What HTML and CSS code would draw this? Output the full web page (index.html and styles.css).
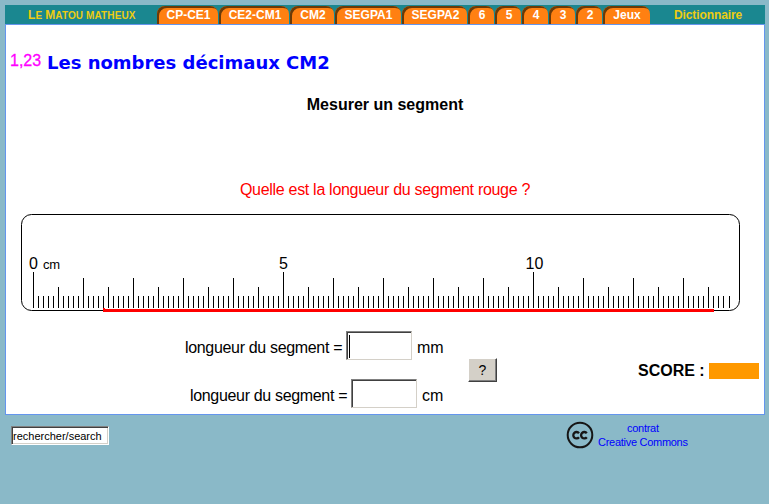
FILE: index.html
```html
<!DOCTYPE html>
<html lang="fr">
<head>
<meta charset="utf-8">
<title>Le Matou matheux</title>
<link rel="stylesheet" href="styles.css">
</head>
<body>
<div class="site">
  <nav class="nav">
    <a class="brand"><b>L</b>e <b>M</b>atou matheux</a>
    <div class="tabs">
      <a class="tab wide-1"><span>CP-CE1</span></a>
      <a class="tab wide-2"><span>CE2-CM1</span></a>
      <a class="tab wide-3"><span>CM2</span></a>
      <a class="tab wide-4"><span>SEGPA1</span></a>
      <a class="tab wide-5"><span>SEGPA2</span></a>
      <a class="tab"><span>6</span></a>
      <a class="tab"><span>5</span></a>
      <a class="tab"><span>4</span></a>
      <a class="tab"><span>3</span></a>
      <a class="tab"><span>2</span></a>
      <a class="tab wide-6"><span>Jeux</span></a>
    </div>
    <a class="dico">Dictionnaire</a>
  </nav>
  <main class="page">
    <header class="heading"><span class="deci">1,23</span><h1>Les nombres décimaux CM2</h1></header>
    <h2><span>Mesurer un segment</span></h2>
    <p class="question"><span>Quelle est la longueur du segment rouge ?</span></p>
    <svg class="ruler" width="719" height="99" viewBox="0 0 719 99">
      <rect x=".5" y="1.5" width="718" height="96" rx="10" fill="none" stroke="#000"/>
      <g id="ticks" fill="#000" shape-rendering="crispEdges"></g>
      <g class="figures">
        <text x="8" y="56">0</text><text class="unit" x="22" y="56" textLength="17">cm</text>
        <text x="258" y="56">5</text><text x="504.500" y="56">10</text>
      </g>
      <path d="M82 95h2v1h609v3H82z" fill="red" shape-rendering="crispEdges"/>
    </svg>
    <div class="answers">
      <div class="fields">
        <label class="row"><span class="label">longueur du segment =</span><span class="box"><i class="caret"></i></span><span>mm</span></label>
        <label class="row"><span class="label">longueur du segment =</span><span class="box"></span><span>cm</span></label>
      </div>
      <button class="check">?</button>
      <div class="score"><span>SCORE :</span><i class="bar"></i></div>
    </div>
  </main>
  <footer class="footer">
    <div class="search"><span>rechercher/search</span></div>
    <svg class="cc" width="28" height="28" viewBox="0 0 28 28" fill="none" stroke="#161616">
      <circle cx="14" cy="14" r="12.300" stroke-width="2"/>
      <path d="M13 12.200A3.200 3.200 0 1 0 13 16.200M20.800 12.200A3.200 3.200 0 1 0 20.800 16.200" stroke-width="2.300"/>
    </svg>
    <a class="license">contrat<br>Creative Commons</a>
  </footer>
</div>
<script src="ruler.js"></script>
</body>
</html>
```
FILE: styles.css
```css
* { box-sizing: border-box; }
body { margin: 0; background: #8ab9c8; font: 16px "Liberation Sans", Arial, sans-serif; color: #000; }
h1, h2, p { margin: 0; }
.site { width: 760px; margin: 5px 0 0 5px; white-space: nowrap; }
.nav { display: flex; height: 19px; background: #1a8790; font: bold 12px/19px "Liberation Sans", Arial, sans-serif; }
.brand { width: 152px; padding-left: 23px; text-transform: uppercase; font-size: 10px; line-height: 20px; letter-spacing: .12px; color: #ec1; }
.brand b { font-size: 12px; }
.tabs { display: flex; gap: 1px; padding-top: 1px; }
.tab { width: 26px; height: 18px; background: #ff8012; color: #fff; border-radius: 8px 8px 0 0; box-shadow: inset 2px 2px 0 #6b3a08; text-align: center; line-height: 18px; padding-left: 2px; }
.wide-1 { width: 61px; }
.wide-2 { width: 70px; }
.wide-3 { width: 44px; }
.wide-4 { width: 66px; padding-left: 1px; }
.wide-5 { width: 65px; }
.wide-6 { width: 47px; padding-left: 1px; }
.dico { margin-left: 24px; line-height: 20px; letter-spacing: -.1px; color: #ec1; }
.page { height: 391px; background: #fff; border: 1px solid #6495ed; }
.heading { display: flex; align-items: center; height: 37px; margin-top: 19px; padding-left: 4px; }
.deci { width: 37px; color: #f0f; font-size: 16px; line-height: 20px; margin-top: -4px; -webkit-text-stroke: .3px #f0f; }
h1 { font: bold 18px/22px "DejaVu Sans", Verdana, sans-serif; color: #00f; }
h2 { margin-top: 14px; font-size: 16px; line-height: 20px; text-align: center; }
.question { margin-top: 65px; line-height: 20px; text-align: center; letter-spacing: -.3px; color: #f00; }
.ruler { display: block; margin: 13px 0 0 15px; }
.figures { font-size: 16px; }
.unit { font-size: 13px; }
.answers { display: flex; height: 90px; margin-top: 13px; }
.fields { width: 462px; }
.row { display: flex; align-items: center; gap: 5px; height: 48px; margin-top: -1px; padding-left: 179px; line-height: 20px; }
.row + .row { margin-top: 0; padding-left: 184px; }
.label { width: 156px; letter-spacing: -.33px; }
.box { width: 66px; height: 29px; margin-top: -5px; padding: 3px 1px; background: #fff; border: 1px solid; border-color: #808080 #d4d0c8 #d4d0c8 #808080; box-shadow: inset 1px 1px #404040; }
.caret { display: block; width: 1px; height: 23px; margin-left: 1px; background: #000; }
.check { width: 29px; height: 24px; margin-top: 33px; padding: 0; background: #d4d0c8; border: 1px solid; border-color: #fff #404040 #404040 #fff; box-shadow: inset -1px -1px #808080; font: 14px "Liberation Sans", Arial, sans-serif; }
.score { display: flex; align-items: center; gap: 4px; height: 20px; margin: 36px 0 0 141px; font-weight: bold; }
.bar { width: 50px; height: 16px; background: #f90; }
.footer { display: flex; padding: 6px 0 0 6px; }
.search { width: 98px; height: 19px; margin-top: 5px; padding: 1px; background: #fff; border: 1px solid; border-color: #808080 #fff #fff #808080; box-shadow: inset 1px 1px #404040, inset -1px -1px #d4d0c8; font: 11px/16px "Liberation Sans", Arial, sans-serif; }
.cc { margin-left: 457px; }
.license { margin-left: 4px; font-size: 11px; line-height: 14px; text-align: center; letter-spacing: -.28px; color: #00f; }
```
FILE: ruler.js
```js
// One graduation per millimetre, 5px apart; taller every 5mm, 1cm and 5cm.
const ticks = document.getElementById('ticks');
for (let mm = 0; mm < 140; mm++) {
  const top = mm % 50 === 0 ? 59 : mm % 10 === 0 ? 65 : mm % 5 === 0 ? 74 : 83;
  const bar = document.createElementNS('http://www.w3.org/2000/svg', 'rect');
  bar.setAttribute('x', mm === 139 ? 708 : 12 + mm * 5);
  bar.setAttribute('y', top);
  bar.setAttribute('width', 1);
  bar.setAttribute('height', 95 - top);
  ticks.appendChild(bar);
}
```
